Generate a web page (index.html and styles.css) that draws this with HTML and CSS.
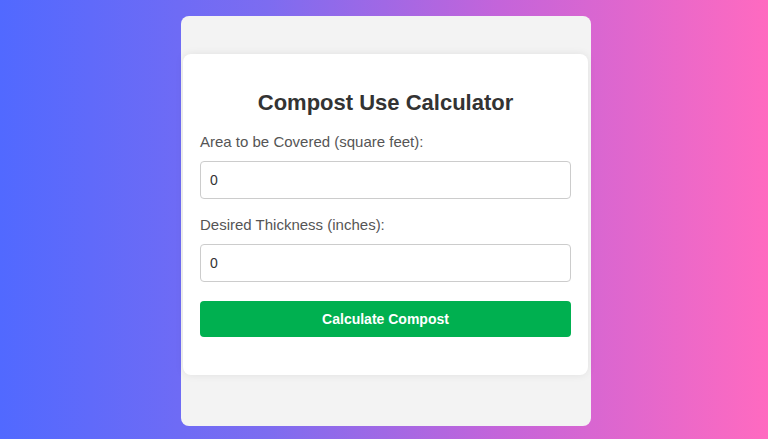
FILE: index.html
```html
<!DOCTYPE html>
<html>
<head>
<meta charset="utf-8">
<link rel="stylesheet" href="styles.css">
</head>
<body>
<div class="panel">
  <div class="card">
    <h2 class="title">Compost Use Calculator</h2>
    <label class="label">Area to be Covered (square feet):</label>
    <input class="field" type="text" value="0">
    <label class="label label-second">Desired Thickness (inches):</label>
    <input class="field" type="text" value="0">
    <button class="btn">Calculate Compost</button>
  </div>
</div>
</body>
</html>
```

FILE: styles.css
```css
html, body {
  margin: 0;
  padding: 0;
  height: 100%;
}
body {
  background: linear-gradient(to right, #5169ff 0%, #7d6cf0 35%, #c464da 65%, #ff6ac0 100%);
  font-family: "Liberation Sans", Arial, sans-serif;
  display: flex;
  justify-content: center;
  align-items: flex-start;
}
.panel {
  margin-top: 16px;
  margin-left: 4px;
  width: 410px;
  height: 410px;
  background: #f3f3f3;
  border-radius: 8px;
  padding: 38px 3px 0 2px;
  box-sizing: border-box;
}
.card {
  background: #ffffff;
  border-radius: 8px;
  box-shadow: 0 0 8px rgba(0, 0, 0, 0.08);
  padding: 36px 17px 38px 17px;
  display: flex;
  flex-direction: column;
}
.title {
  margin: 0;
  font-size: 22px;
  line-height: 25px;
  font-weight: bold;
  color: #333333;
  text-align: center;
}
.label {
  margin-top: 19px;
  font-size: 15px;
  line-height: 16px;
  color: #555555;
}
.label-second {
  margin-top: 18px;
}
.field {
  margin-top: 11px;
  height: 38px;
  box-sizing: border-box;
  border: 1px solid #cccccc;
  border-radius: 4px;
  padding: 0 9px;
  font-family: "Liberation Sans", Arial, sans-serif;
  font-size: 14px;
  color: #333333;
  outline: none;
}
.btn {
  margin-top: 19px;
  height: 36px;
  border: none;
  border-radius: 4px;
  background: #00b050;
  color: #ffffff;
  font-family: "Liberation Sans", Arial, sans-serif;
  font-size: 14px;
  font-weight: bold;
  cursor: pointer;
}
```
